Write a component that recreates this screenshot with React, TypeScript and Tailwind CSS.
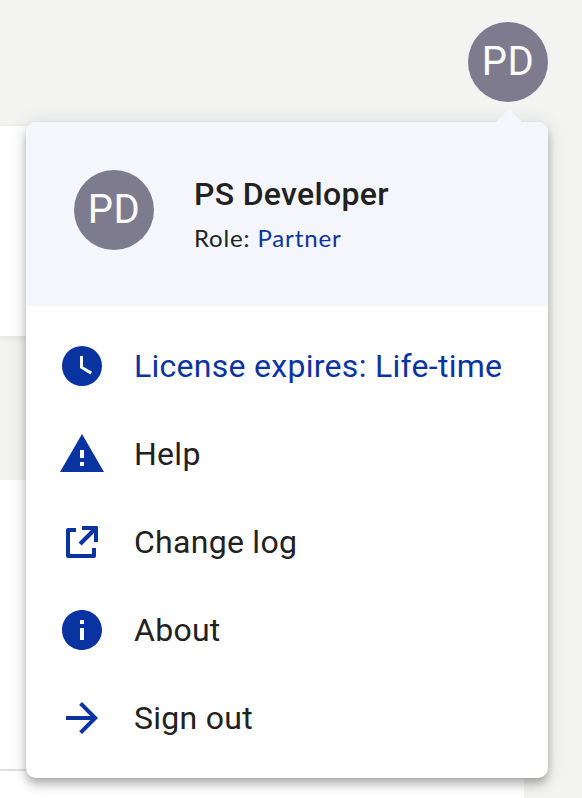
import type { ReactNode } from "react";

const roboto = "font-['Roboto','Liberation_Sans',sans-serif]";
const lato = "font-['Lato','Liberation_Sans',sans-serif]";

function Avatar() {
  return (
    <div className={`${roboto} flex size-20 shrink-0 items-center justify-center rounded-full bg-[#7f7b8f] text-[40px] leading-none tracking-[0.4px] text-[#fafafa]`}>
      PD
    </div>
  );
}

function Icon({ children }: { children: ReactNode }) {
  return (
    <svg viewBox="0 0 24 24" className="size-12 shrink-0 fill-[#0a33a2]">
      {children}
    </svg>
  );
}

const items = [
  {
    label: "License expires: Life-time",
    color: "text-[#0a33a2]",
    icon: <path d="M12 2a10 10 0 1 0 0 20a10 10 0 0 0 0-20zM16.2 16.2L11 13V7h1.5v5.2l4.5 2.7z" />,
  },
  { label: "Help", color: "text-[#212121]", icon: <path d="M1 21h22L12 2 1 21zm12-3h-2v-2h2v2zm0-4h-2v-4h2v4z" /> },
  {
    label: "Change log",
    color: "text-[#212121]",
    icon: <path d="M9 5v2H6v11h11v-3h2v4a1 1 0 0 1-1 1H5a1 1 0 0 1-1-1V6a1 1 0 0 1 1-1zM12 4h7.3a.7.7 0 0 1 .7.7V12h-2V7.5l-6.2 6.2-1.5-1.5L16.5 6H12z" />,
  },
  {
    label: "About",
    color: "text-[#212121]",
    icon: <path d="M12 2C6.48 2 2 6.48 2 12s4.48 10 10 10 10-4.48 10-10S17.52 2 12 2zm1 15h-2v-6h2v6zm0-8h-2V7h2v2z" />,
  },
  {
    label: "Sign out",
    color: "text-[#212121]",
    icon: <path d="M12 4l-1.41 1.41L16.17 11H4v2h12.17l-5.58 5.59L12 20l8-8z" />,
  },
];

export default function App() {
  return (
    <div className="relative h-[798px] w-[582px] overflow-hidden bg-[#f3f3f1]">
      <div className="flex w-[524px] flex-col gap-36 pt-[126px]">
        <div className="h-[210px] bg-white shadow-[0_2px_8px_rgba(0,0,0,0.08)]" />
        <div className="h-[318px] bg-white pt-[289px]">
          <div className="h-0.5 bg-[#e0e0e0]" />
        </div>
      </div>
      <div className="absolute top-[22px] right-[34px]">
        <Avatar />
      </div>
      <div className="absolute top-[122px] left-[26px] w-[522px] rounded-[10px] bg-white shadow-[0_4px_8px_-2px_rgba(0,0,0,0.2),0_8px_10px_0_rgba(0,0,0,0.14),0_2px_20px_0_rgba(0,0,0,0.12)]">
        <svg viewBox="0 0 26 13" className="absolute -top-[13px] right-[26px] h-[13px] w-[26px] fill-[#f5f6fb]">
          <path d="M0 13L13 0l13 13z" />
        </svg>
        <div className="flex h-[184px] items-start gap-10 rounded-t-[10px] bg-[#f5f6fb] pt-12 pr-6 pl-12">
          <Avatar />
          <div className="flex flex-col">
            <div className={`${roboto} text-[32px] leading-[48px] font-medium tracking-[0.3px] text-[#212121]`}>PS Developer</div>
            <div className={`${lato} text-2xl leading-10 tracking-[0.85px] text-[#212121]`}>
              Role: <span className="text-[#0a33a2]">Partner</span>
            </div>
          </div>
        </div>
        <div className="py-4">
          {items.map((item) => (
            <div key={item.label} className="flex h-[88px] items-center gap-7 pl-8">
              <Icon>{item.icon}</Icon>
              <span className={`${roboto} ${item.color} text-[32px] leading-none tracking-[0.28px] whitespace-nowrap`}>{item.label}</span>
            </div>
          ))}
        </div>
      </div>
    </div>
  );
}
